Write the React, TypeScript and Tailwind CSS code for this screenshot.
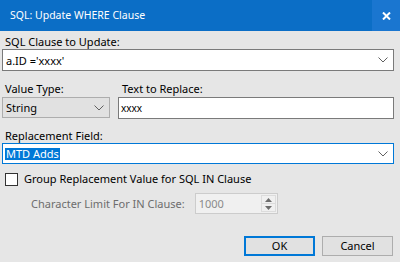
import * as React from "react";

// ─── Small parts ──────────────────────────────────────────────────────────────

function Chevron({ className }: { className?: string }) {
  return (
    <svg width="10" height="6" viewBox="0 0 10 6" className={className}>
      <path d="M0.5 0.5 L5 5 L9.5 0.5" fill="none" stroke="#606060" strokeWidth="1" />
    </svg>
  );
}

function SpinArrow({ up }: { up?: boolean }) {
  return (
    <svg width="7" height="4" viewBox="0 0 7 4">
      <path d={up ? "M0 4 L3.5 0 L7 4 Z" : "M0 0 L3.5 4 L7 0 Z"} fill="#6d6d6d" />
    </svg>
  );
}

// ─── Dialog ───────────────────────────────────────────────────────────────────

export default function App() {
  return (
    <div
      className="flex h-[262px] w-[400px] flex-col bg-[#e6e6e6] text-[11px] text-black"
      style={{ fontFamily: '"Noto Sans", "Open Sans", sans-serif' }}
    >
      {/* Title bar */}
      <div className="flex h-[31px] shrink-0 items-center bg-[#0b6ec6]">
        <span className="pl-[10px] text-[10.5px] text-white">SQL: Update WHERE Clause</span>
        <div className="ml-auto flex h-full w-[28px] items-center justify-center bg-[#1a76d0]">
          <svg width="9" height="8" viewBox="0 0 9 8">
            <path d="M1 0.5 L8 7.5 M8 0.5 L1 7.5" stroke="#fff" strokeWidth="2" />
          </svg>
        </div>
      </div>

      {/* Body */}
      <div className="flex flex-1 flex-col px-[2px] pt-[4px]">
        <label className="pl-[3px] leading-[14px]">SQL Clause to Update:</label>
        <div className="flex h-[22px] w-[392px] items-center border border-[#7a7a7a] bg-white pl-[3px] pr-[5px]">
          <span className="leading-none">a.ID ='xxxx'</span>
          <Chevron className="ml-auto" />
        </div>

        <div className="mt-[11px] flex gap-[8px]">
          <div className="flex flex-col">
            <label className="pl-[3px] leading-[14px]">Value Type:</label>
            <div className="mt-[1px] flex h-[21px] w-[108px] items-center border border-[#adadad] bg-[#e1e1e1] pl-[3px] pr-[5px]">
              <span className="leading-none">String</span>
              <Chevron className="ml-auto" />
            </div>
          </div>
          <div className="flex flex-1 flex-col">
            <label className="pl-[4px] leading-[14px]">Text to Replace:</label>
            <div className="mt-[1px] flex h-[22px] w-[276px] items-center border border-[#7a7a7a] bg-white pl-[2px]">
              <span className="text-[10px] leading-none">xxxx</span>
            </div>
          </div>
        </div>

        <label className="mt-[10px] pl-[3px] leading-[14px]">Replacement Field:</label>
        <div className="flex h-[21px] w-[392px] items-center border border-[#0078d7] bg-white pl-[2px] pr-[5px]">
          <span className="bg-[#0078d7] px-[1px] leading-[12px] text-white">MTD Adds</span>
          <Chevron className="ml-auto" />
        </div>

        <div className="mt-[8px] flex items-center pl-[3px]">
          <div className="h-[13px] w-[13px] border border-[#333] bg-white" />
          <span className="ml-[6px] leading-[14px]">Group Replacement Value for SQL IN Clause</span>
        </div>

        <div className="mt-[7px] flex items-center pl-[29px]">
          <span className="leading-[14px] text-[#6d6d6d]">Character Limit For IN Clause:</span>
          <div className="ml-[10px] flex h-[21px] w-[83px] items-center border border-[#cccccc] bg-[#f0f0f0] pl-[3px] pr-[1px]">
            <span className="leading-none text-[#8a8a8a]">1000</span>
            <div className="ml-auto flex h-[17px] w-[15px] flex-col border border-[#dcdcdc]">
              <div className="flex flex-1 items-center justify-center border-b border-[#dcdcdc]">
                <SpinArrow up />
              </div>
              <div className="flex flex-1 items-center justify-center">
                <SpinArrow />
              </div>
            </div>
          </div>
        </div>

        <div className="mt-auto mb-[6px] flex justify-end gap-[7px] pr-[5px]">
          <button className="flex h-[20px] w-[71px] items-center justify-center border-2 border-[#0078d7] bg-[#e1e1e1]">
            OK
          </button>
          <button className="flex h-[20px] w-[71px] items-center justify-center border border-[#adadad] bg-[#e1e1e1]">
            Cancel
          </button>
        </div>
      </div>
    </div>
  );
}
